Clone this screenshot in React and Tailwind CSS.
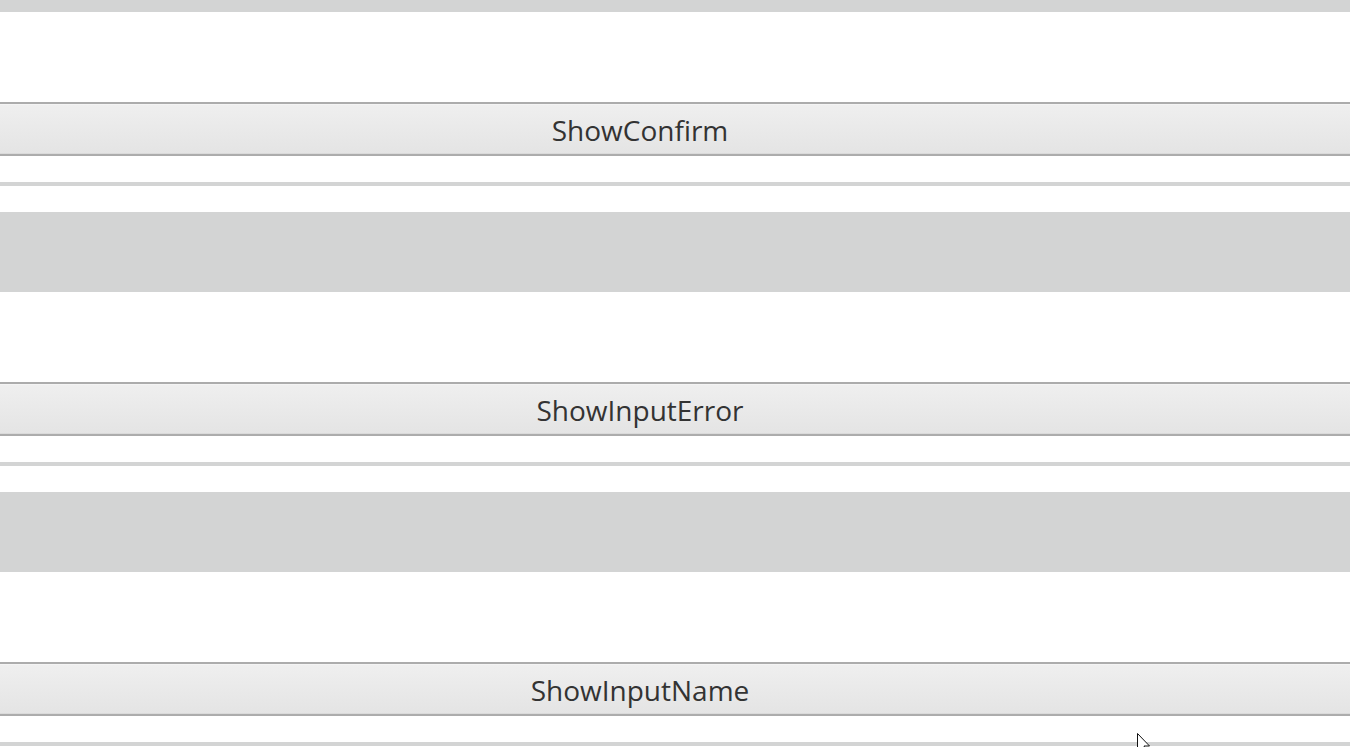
const items = ['ShowConfirm', 'ShowInputError', 'ShowInputName'];

const Band = () => <div className="h-[80px] bg-[#d3d4d4]" />;

const Row = ({ label }) => (
  <div>
    <div className="h-[90px] bg-white" />
    <button
      type="button"
      className="block w-full h-[54px] border-y-2 border-[#acacac] bg-gradient-to-b from-[#efefef] to-[#e4e4e4] pr-[70px] pt-[2px] text-[28px] leading-none text-[#333] shadow-[inset_0_1px_0_#f4f4f4,inset_0_-1px_0_#dadada]"
    >
      {label}
    </button>
    <div className="h-[26px] bg-white" />
    <div className="h-[4px] bg-[#d3d4d4]" />
    <div className="h-[26px] bg-white" />
  </div>
);

const Cursor = () => (
  <svg className="absolute left-[1137px] top-[733px]" width="14" height="22" viewBox="0 0 14 22">
    <path d="M0.5 0.5 L0.5 18 L4.5 14 L7.5 21 L10 20 L7 13 L12.5 13 Z" fill="#fff" stroke="#111" strokeWidth="1" />
  </svg>
);

export default function App() {
  return (
    <div className="relative h-[747px] overflow-hidden bg-white font-['Open_Sans',sans-serif]">
      <div className="h-[12px] bg-[#d3d4d4]" />
      {items.map((label, i) => (
        <div key={label}>
          {i > 0 && <Band />}
          <Row label={label} />
        </div>
      ))}
      <Cursor />
    </div>
  );
}
